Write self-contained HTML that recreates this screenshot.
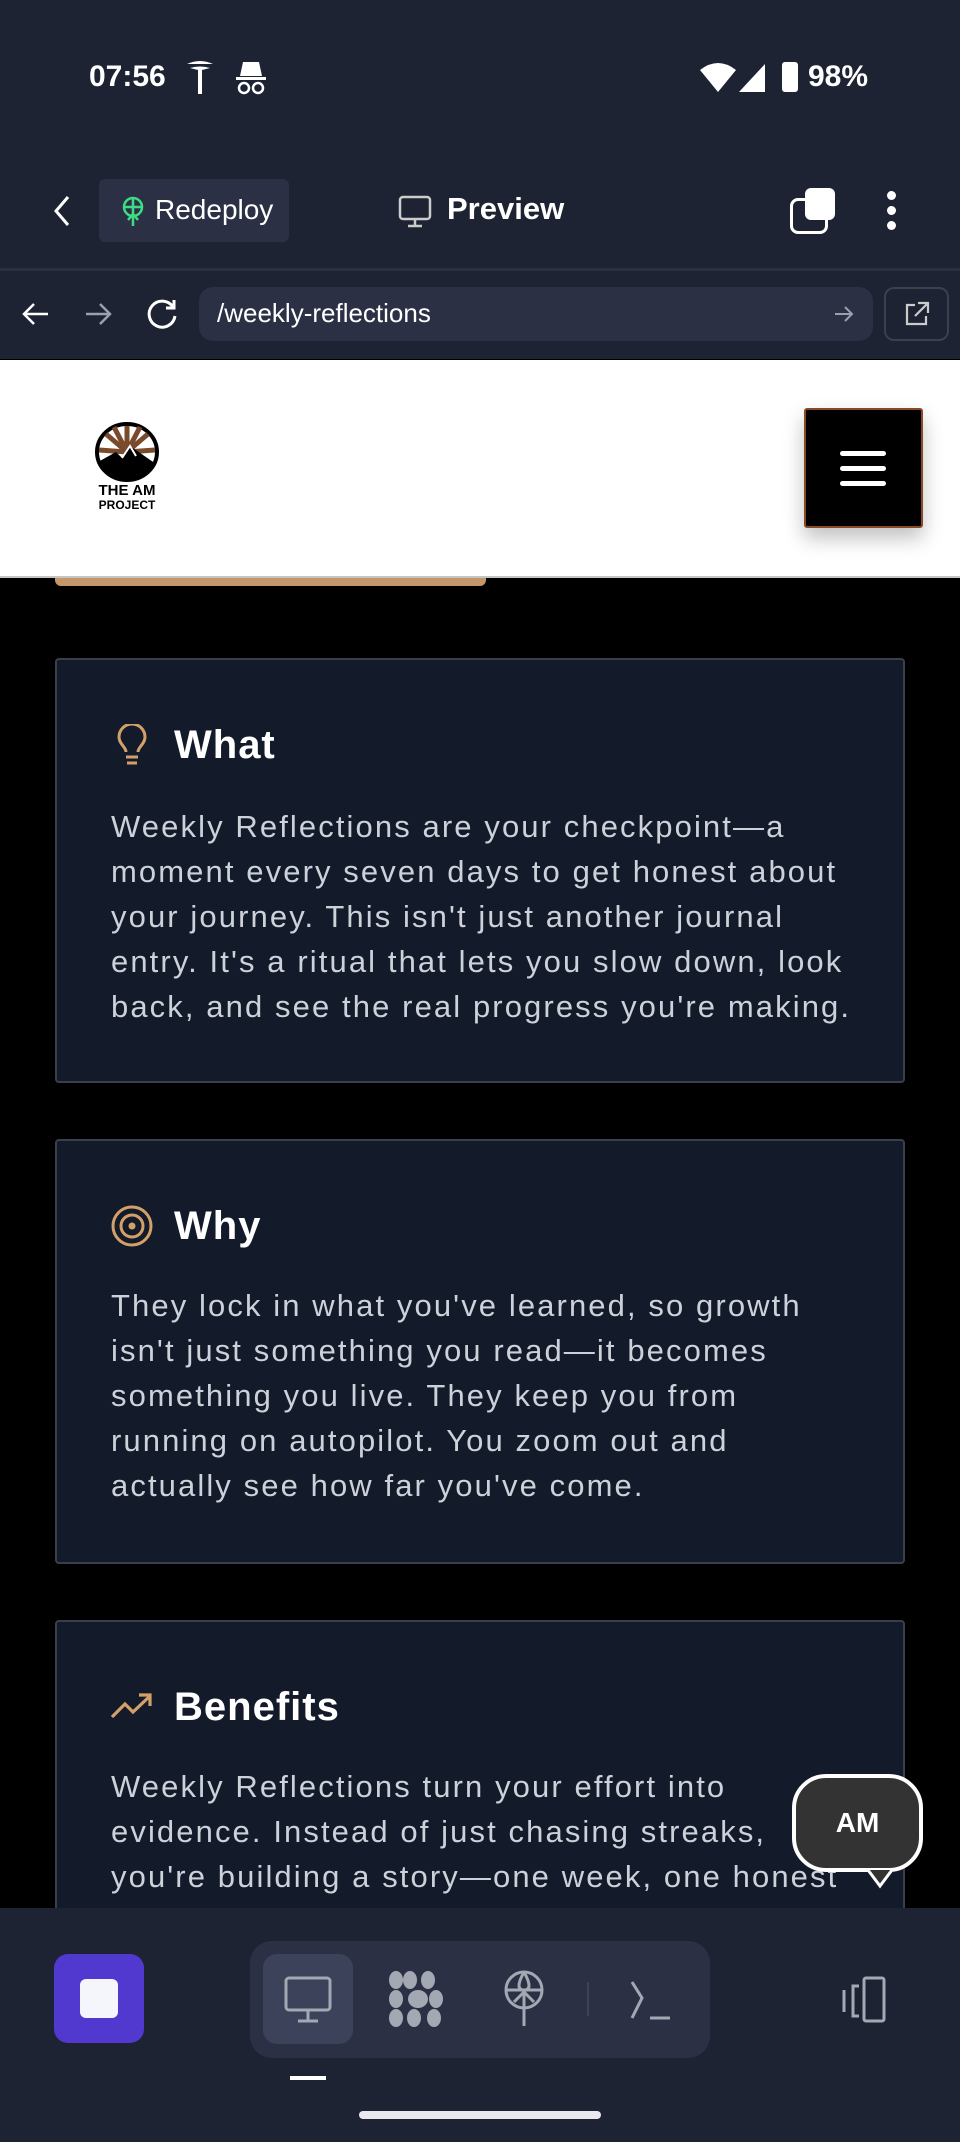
<!DOCTYPE html>
<html><head><meta charset="utf-8"><style>
*{margin:0;padding:0;box-sizing:border-box}
body{width:960px;height:2142px;background:#000;font-family:"Liberation Sans",sans-serif;position:relative;overflow:hidden}
.abs{position:absolute}
.top{left:0;top:0;width:960px;height:359px;background:#1e2333}
.st{color:#fff;font-size:30px;font-weight:bold}
.card{position:absolute;left:55px;width:850px;background:#131a29;border:2px solid #3a3f4c;border-radius:4px}
.h{position:absolute;left:118px;font-size:40px;font-weight:bold;color:#fff;letter-spacing:1px}
.p{position:absolute;left:111px;font-size:31px;line-height:45px;color:#cdd1d9;letter-spacing:2.1px;white-space:nowrap}
</style></head><body>
<div class="abs top"></div>
<div class="abs" style="left:0;top:268px;width:960px;height:3px;background:#2a3042"></div>
<div class="abs st" style="left:89px;top:60px">07:56</div>
<svg class="abs" style="left:185px;top:60px" width="30" height="36" viewBox="0 0 30 36"><path d="M2 4q13-6 26 0M5 8q10-3 20 0l-8 2v24h-4V10z" fill="#fff"/></svg>
<svg class="abs" style="left:234px;top:60px" width="34" height="36" viewBox="0 0 34 36"><path d="M9 2h16l3 14H6z" fill="#fff"/><rect x="2" y="17" width="30" height="3" fill="#fff"/><circle cx="10" cy="28" r="5" fill="none" stroke="#fff" stroke-width="2.5"/><circle cx="24" cy="28" r="5" fill="none" stroke="#fff" stroke-width="2.5"/></svg>
<svg class="abs" style="left:700px;top:62px" width="36" height="30" viewBox="0 0 36 30"><path d="M0 8q18-14 36 0L18 30z" fill="#fff"/></svg>
<svg class="abs" style="left:737px;top:62px" width="30" height="30" viewBox="0 0 30 30"><path d="M28 2v28H2z" fill="#fff"/></svg>
<div class="abs" style="left:782px;top:62px;width:16px;height:30px;background:#fff;border-radius:3px"></div>
<div class="abs st" style="left:808px;top:60px">98%</div>
<svg class="abs" style="left:50px;top:193px" width="24" height="36" viewBox="0 0 24 36"><path d="M18 4L6 18l12 14" stroke="#fff" stroke-width="3" fill="none"/></svg>
<div class="abs" style="left:99px;top:179px;width:190px;height:63px;background:#2b3044;border-radius:6px"></div>
<svg class="abs" style="left:120px;top:196px" width="26" height="32" viewBox="0 0 26 32"><circle cx="13" cy="11" r="9" fill="none" stroke="#3ddc84" stroke-width="2.5"/><path d="M4 11h18M13 2v28M8 24l5-6 5 6" stroke="#3ddc84" stroke-width="2.5" fill="none"/></svg>
<div class="abs" style="left:155px;top:194px;color:#fff;font-size:28px">Redeploy</div>
<svg class="abs" style="left:398px;top:195px" width="34" height="34" viewBox="0 0 34 34"><rect x="2" y="2" width="30" height="22" rx="3" fill="none" stroke="#ccc" stroke-width="2.5"/><path d="M17 24v6M10 31h14" stroke="#ccc" stroke-width="2.5"/></svg>
<div class="abs" style="left:447px;top:191px;color:#fff;font-size:31px;font-weight:bold">Preview</div>
<div class="abs" style="left:790px;top:198px;width:38px;height:36px;border:3px solid #fff;border-radius:8px"></div>
<div class="abs" style="left:805px;top:188px;width:30px;height:32px;background:#fff;border-radius:6px"></div>
<div class="abs" style="left:887px;top:191px;width:9px;height:9px;background:#fff;border-radius:50%"></div>
<div class="abs" style="left:887px;top:206px;width:9px;height:9px;background:#fff;border-radius:50%"></div>
<div class="abs" style="left:887px;top:221px;width:9px;height:9px;background:#fff;border-radius:50%"></div>
<svg class="abs" style="left:20px;top:298px" width="110" height="32" viewBox="0 0 110 32"><path d="M28 16H4M14 6L4 16l10 10" stroke="#fff" stroke-width="2.5" fill="none"/><path d="M90 16H66M80 6l10 10-10 10" stroke="#9aa0ad" stroke-width="2.5" fill="none"/></svg>
<svg class="abs" style="left:145px;top:297px" width="34" height="34" viewBox="0 0 34 34"><path d="M28 10A13 13 0 1 0 30 19" stroke="#fff" stroke-width="3" fill="none"/><path d="M29 3v8h-8" stroke="#fff" stroke-width="3" fill="none"/></svg>
<div class="abs" style="left:199px;top:287px;width:674px;height:54px;background:#2b3044;border-radius:14px"></div>
<div class="abs" style="left:217px;top:298px;color:#fff;font-size:26px">/weekly-reflections</div>
<svg class="abs" style="left:833px;top:303px" width="22" height="22" viewBox="0 0 22 22"><path d="M2 11h17M12 4l7 7-7 7" stroke="#9aa0ad" stroke-width="2" fill="none"/></svg>
<div class="abs" style="left:884px;top:287px;width:65px;height:54px;border:2px solid #3a4052;border-radius:10px"></div>
<svg class="abs" style="left:903px;top:300px" width="28" height="28" viewBox="0 0 28 28"><path d="M12 5H4v19h19v-8M15 3h10v10M25 3L12 16" stroke="#ccc" stroke-width="2.2" fill="none"/></svg>
<div class="abs" style="left:0;top:360px;width:960px;height:216px;background:#fff"></div>
<div class="abs" style="left:0;top:576px;width:960px;height:2px;background:#c5c5c5"></div>
<div class="abs" style="left:55px;top:578px;width:431px;height:8px;background:#c4976a;border-radius:0 0 6px 6px"></div>
<svg class="abs" style="left:94px;top:422px" width="66" height="60" viewBox="0 0 66 60"><ellipse cx="33" cy="30" rx="30" ry="28" fill="#fff" stroke="#000" stroke-width="4"/><g stroke="#7a4a2c" stroke-width="5"><path d="M33 30L33 4M33 30L12 12M33 30L54 12M33 30L5 28M33 30L61 28M33 30L20 5M33 30L46 5"/></g><path d="M4 40L22 30l6 6 8-12 26 18q-8 16-29 16T4 40z" fill="#000"/><path d="M28 36l8-12 6 10" stroke="#fff" stroke-width="2" fill="none"/></svg>
<div class="abs" style="left:92px;top:484px;font-size:15px;font-weight:bold;color:#000;line-height:14px;text-align:center;width:70px">THE AM<br><span style="font-size:12px">PROJECT</span></div>
<div class="abs" style="left:804px;top:408px;width:119px;height:120px;background:#000;border:2px solid #8a4a25;border-radius:3px;box-shadow:0 10px 20px rgba(0,0,0,.25)"></div>
<div class="abs" style="left:840px;top:451px;width:46px;height:5px;background:#fff;border-radius:3px"></div>
<div class="abs" style="left:840px;top:466px;width:46px;height:5px;background:#fff;border-radius:3px"></div>
<div class="abs" style="left:840px;top:481px;width:46px;height:5px;background:#fff;border-radius:3px"></div>

<div class="card" style="top:658px;height:425px"></div>
<svg class="abs" style="left:116px;top:724px" width="32" height="42" viewBox="0 0 32 42"><path d="M10 28c0-5-7-8-7-15a13 13 0 0 1 26 0c0 7-7 10-7 15" stroke="#d4a06a" stroke-width="3" fill="none"/><path d="M10 33h12M11 39h10" stroke="#d4a06a" stroke-width="3"/></svg>
<div class="h" style="left:174px;top:723px">What</div>
<div class="p" style="top:804px">Weekly Reflections are your checkpoint—a<br>moment every seven days to get honest about<br>your journey. This isn't just another journal<br>entry. It's a ritual that lets you slow down, look<br>back, and see the real progress you're making.</div>

<div class="card" style="top:1139px;height:425px"></div>
<svg class="abs" style="left:111px;top:1205px" width="42" height="42" viewBox="0 0 42 42"><circle cx="21" cy="21" r="19" fill="none" stroke="#d4a06a" stroke-width="3"/><circle cx="21" cy="21" r="11" fill="none" stroke="#d4a06a" stroke-width="3"/><circle cx="21" cy="21" r="3.5" fill="#d4a06a"/></svg>
<div class="h" style="left:174px;top:1204px">Why</div>
<div class="p" style="top:1283px">They lock in what you've learned, so growth<br>isn't just something you read—it becomes<br>something you live. They keep you from<br>running on autopilot. You zoom out and<br>actually see how far you've come.</div>

<div class="card" style="top:1620px;height:400px"></div>
<svg class="abs" style="left:110px;top:1692px" width="44" height="28" viewBox="0 0 44 28"><path d="M2 25l13-13 8 8L40 4M29 3h11v11" stroke="#d4a06a" stroke-width="3.2" fill="none"/></svg>
<div class="h" style="left:174px;top:1685px">Benefits</div>
<div class="p" style="top:1764px">Weekly Reflections turn your effort into<br>evidence. Instead of just chasing streaks,<br>you're building a story—one week, one honest</div>

<div class="abs" style="left:792px;top:1774px;width:131px;height:98px;background:#333;border:4px solid #fff;border-radius:34px;color:#fff;font-size:28px;font-weight:bold;text-align:center;line-height:90px">AM</div>
<svg class="abs" style="left:862px;top:1868px" width="36" height="22" viewBox="0 0 36 22"><path d="M6 2l12 16L30 2" fill="#333" stroke="#fff" stroke-width="3"/></svg>

<div class="abs" style="left:0;top:1908px;width:960px;height:234px;background:#1e2333"></div>
<div class="abs" style="left:54px;top:1954px;width:90px;height:89px;background:#5138cf;border-radius:14px"></div>
<div class="abs" style="left:80px;top:1979px;width:38px;height:39px;background:#f4f6fb;border-radius:6px"></div>
<div class="abs" style="left:250px;top:1941px;width:460px;height:117px;background:#2b3044;border-radius:22px"></div>
<div class="abs" style="left:263px;top:1954px;width:90px;height:90px;background:#3b4259;border-radius:14px"></div>
<svg class="abs" style="left:282px;top:1975px" width="52" height="50" viewBox="0 0 52 50"><rect x="4" y="3" width="44" height="32" rx="3" fill="none" stroke="#a3a8b3" stroke-width="3"/><path d="M26 35v10M16 46h20" stroke="#a3a8b3" stroke-width="3"/></svg>
<svg class="abs" style="left:388px;top:1970px" width="56" height="58" viewBox="0 0 56 58"><g fill="#a3a8b3"><ellipse cx="8" cy="10" rx="7" ry="9"/><ellipse cx="22" cy="10" rx="7" ry="9"/><ellipse cx="40" cy="10" rx="7" ry="9"/><ellipse cx="8" cy="29" rx="7" ry="9"/><ellipse cx="30" cy="29" rx="10" ry="9"/><ellipse cx="48" cy="29" rx="7" ry="9"/><ellipse cx="8" cy="48" rx="7" ry="9"/><ellipse cx="26" cy="48" rx="7" ry="9"/><ellipse cx="46" cy="48" rx="7" ry="9"/></g></svg>
<svg class="abs" style="left:502px;top:1970px" width="44" height="58" viewBox="0 0 44 58"><circle cx="22" cy="20" r="18" fill="none" stroke="#a3a8b3" stroke-width="3"/><path d="M4 20h36M22 2q-10 18 0 18q10 0 0-18" stroke="#a3a8b3" stroke-width="3" fill="none"/><path d="M22 56V22M12 32l10-10 10 10" stroke="#a3a8b3" stroke-width="3" fill="none"/></svg>
<div class="abs" style="left:587px;top:1982px;width:2px;height:34px;background:#3d4458"></div>
<svg class="abs" style="left:628px;top:1978px" width="46" height="44" viewBox="0 0 46 44"><path d="M4 4l10 16-10 20M22 40h20" stroke="#a3a8b3" stroke-width="3" fill="none"/></svg>
<svg class="abs" style="left:834px;top:1976px" width="56" height="48" viewBox="0 0 56 48"><rect x="30" y="2" width="20" height="43" rx="2" fill="none" stroke="#a3a8b3" stroke-width="3"/><path d="M25 10h-6v30h6M10 14v22" stroke="#a3a8b3" stroke-width="3" fill="none"/></svg>
<div class="abs" style="left:290px;top:2076px;width:36px;height:4px;background:#fff"></div>
<div class="abs" style="left:359px;top:2111px;width:242px;height:8px;background:#e8e9ee;border-radius:4px"></div>
</body></html>
